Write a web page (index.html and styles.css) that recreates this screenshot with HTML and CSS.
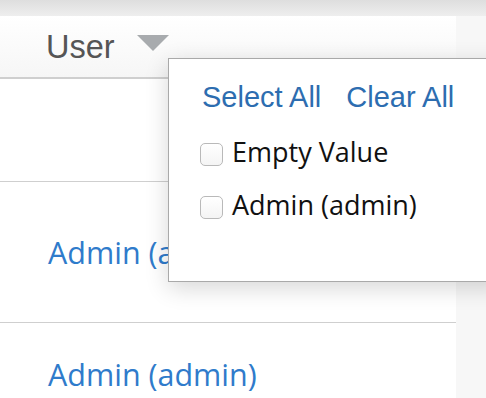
FILE: index.html
```html
<!DOCTYPE html>
<html>
<head>
<meta charset="utf-8">
<link rel="stylesheet" href="styles.css">
</head>
<body>
<div class="topbar"></div>
<div class="page">
  <div class="table">
    <div class="head">
      <span class="head-label">User</span>
      <span class="caret"></span>
    </div>
    <div class="row row-empty"></div>
    <div class="row row-mid"><a class="link">Admin (admin)</a></div>
    <div class="row row-last"><a class="link">Admin (admin)</a></div>
  </div>
  <div class="side"></div>
  <div class="dropdown">
    <div class="actions">
      <a class="action">Select All</a>
      <a class="action action-second">Clear All</a>
    </div>
    <div class="options">
      <label class="option"><span class="box"></span><span class="opt-text">Empty Value</span></label>
      <label class="option"><span class="box"></span><span class="opt-text">Admin (admin)</span></label>
    </div>
  </div>
</div>
</body>
</html>
```

FILE: styles.css
```css
html, body {
  margin: 0;
  padding: 0;
  background: #f7f7f7;
  overflow: hidden;
  width: 486px;
  height: 398px;
}

.topbar {
  height: 16px;
  background: linear-gradient(#dedede, #eeeeee);
}

.page {
  position: relative;
  display: flex;
  height: 382px;
}

.table {
  width: 456px;
  background: #ffffff;
  flex: none;
}

.side {
  flex: 1;
  background: #f7f7f7;
}

.head {
  box-sizing: border-box;
  height: 63px;
  padding: 13px 0 0 46px;
  display: flex;
  align-items: flex-start;
  background: linear-gradient(#ffffff, #f6f6f6);
  border-bottom: 2px solid #cfcfcf;
}

.head-label {
  font-family: "Liberation Sans", Arial, sans-serif;
  font-size: 32.5px;
  line-height: 36px;
  color: #555555;
}

.caret {
  width: 0;
  height: 0;
  border-left: 16px solid transparent;
  border-right: 16px solid transparent;
  border-top: 16px solid #a8abae;
  margin: 6px 0 0 22px;
}

.row {
  box-sizing: border-box;
  border-bottom: 1px solid #cfcfcf;
  padding-left: 48px;
}

.row-empty {
  height: 103px;
}

.row-mid {
  height: 141px;
  padding-top: 50px;
}

.row-last {
  padding-top: 31px;
  border-bottom: none;
}

.link {
  display: block;
  font-family: "Open Sans", "Noto Sans", sans-serif;
  font-size: 30.5px;
  line-height: 40px;
  color: #2f7bcb;
}

.dropdown {
  position: absolute;
  left: 168px;
  top: 42px;
  width: 340px;
  height: 224px;
  box-sizing: border-box;
  background: #ffffff;
  border: 1px solid #a9a9a9;
  box-shadow: 0 6px 22px rgba(0, 0, 0, 0.16);
  padding: 22px 0 0 33px;
}

.actions {
  display: flex;
  margin-bottom: 24px;
}

.action {
  font-family: "Liberation Sans", Arial, sans-serif;
  font-size: 29px;
  line-height: 32px;
  color: #2d6db0;
}

.action-second {
  margin-left: 25px;
}

.options {
  display: flex;
  flex-direction: column;
  gap: 23px;
}

.option {
  display: flex;
  align-items: flex-start;
}

.box {
  box-sizing: border-box;
  width: 23px;
  height: 23px;
  margin-top: 6px;
  margin-left: -2px;
  border: 1px solid #b9b9b9;
  border-radius: 5px;
  background: linear-gradient(#ffffff, #f4f4f4);
  flex: none;
}

.opt-text {
  margin-left: 9px;
  font-family: "Open Sans", "Noto Sans", sans-serif;
  font-size: 27px;
  line-height: 30px;
  color: #111111;
}
```
